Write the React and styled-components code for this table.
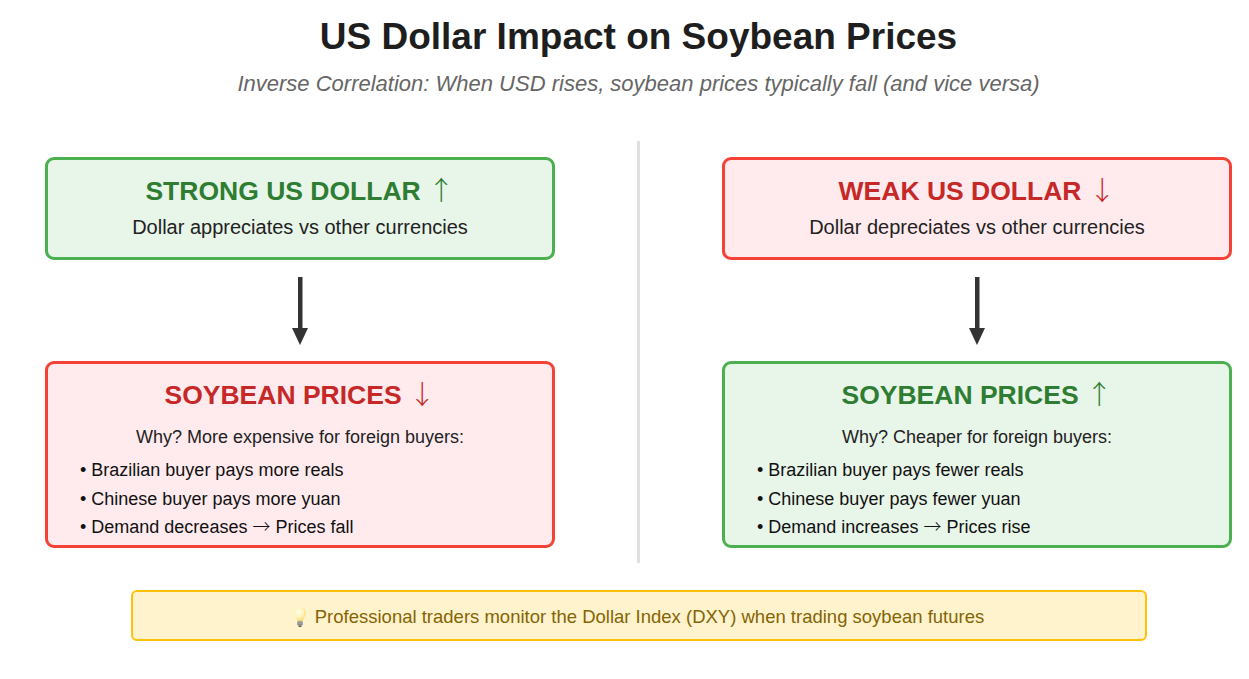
import React from "react";
import styled, { createGlobalStyle } from "styled-components";

const Global = createGlobalStyle`
  html, body { margin: 0; padding: 0; background: #ffffff; }
  body { font-family: "Liberation Sans", Arial, Helvetica, sans-serif; color: #222; }
  * { box-sizing: border-box; }
`;

const Page = styled.div`
  width: 1249px;
  padding: 16px 17px 0 45px;
`;

const Title = styled.h1`
  margin: 0;
  font-size: 37px;
  line-height: 42px;
  font-weight: 700;
  color: #1e1e1e;
  text-align: center;
`;

const Subtitle = styled.p`
  margin: 13px 0 0;
  font-size: 22px;
  line-height: 26px;
  font-style: italic;
  color: #666;
  text-align: center;
`;

const Columns = styled.div`
  margin-top: 44px;
  display: grid;
  grid-template-columns: 510px 3px 510px;
  justify-content: space-between;
`;

const Column = styled.div`
  display: flex;
  flex-direction: column;
  align-items: stretch;
  padding: 16px 0 15px;
`;

const Divider = styled.div`
  background: #e0e0e0;
  width: 3px;
`;

const palette = {
  green: { border: "#4caf50", bg: "#e8f5e9", title: "#2e7d32" },
  red: { border: "#f44336", bg: "#ffebee", title: "#c62828" },
};

const Box = styled.div`
  border: 3px solid ${(p) => palette[p.$tone].border};
  background: ${(p) => palette[p.$tone].bg};
  border-radius: 9px;
  height: ${(p) => (p.$tall ? "187px" : "103px")};
  padding: 16px 20px 0;
`;

const BoxTitle = styled.h2`
  margin: 0;
  font-size: 26.5px;
  line-height: 30px;
  height: 30px;
  font-weight: 700;
  text-align: center;
  color: ${(p) => palette[p.$tone].title};
`;

const Sym = styled.span`
  font-family: "Noto Sans CJK JP", "Noto Sans CJK SC", sans-serif;
  font-weight: 300;
  line-height: 0;
  font-size: ${(p) => p.$size || "1em"};
`;

const BoxText = styled.p`
  margin: 10px 0 0;
  font-size: 20px;
  line-height: 23px;
  text-align: center;
  color: #222;
`;

const Why = styled.p`
  margin: 17px 0 0;
  font-size: 18px;
  line-height: 21px;
  text-align: center;
  color: #222;
`;

const List = styled.ul`
  list-style: none;
  margin: 12px 0 0;
  padding: 0 0 0 12px;
  display: flex;
  flex-direction: column;
  gap: 7.5px;
`;

const Item = styled.li`
  font-size: 18px;
  line-height: 21px;
  height: 21px;
  color: #111;
`;

const ArrowWrap = styled.div`
  display: flex;
  justify-content: center;
  padding: 17px 0 16px;
`;

const Footer = styled.div`
  margin: 27px auto 0;
  width: 1016px;
  height: 51px;
  border: 2px solid #ffc107;
  background: #fff3cd;
  border-radius: 6px;
  display: flex;
  align-items: center;
  justify-content: center;
  gap: 8px;
  padding-top: 3px;
  font-size: 18.5px;
  color: #856404;
`;

const DownArrow = () => (
  <ArrowWrap>
    <svg width="16" height="68" viewBox="0 0 16 68">
      <rect x="6" y="0" width="4.5" height="54" fill="#333" />
      <polygon points="0,51 16,51 8,68" fill="#333" />
    </svg>
  </ArrowWrap>
);

const Bulb = () => (
  <svg width="14" height="22" viewBox="0 0 14 22">
    <defs>
      <radialGradient id="bulbfill" cx="40%" cy="35%" r="65%">
        <stop offset="0%" stopColor="#fffdf0" />
        <stop offset="60%" stopColor="#fff3b8" />
        <stop offset="100%" stopColor="#f2d66a" />
      </radialGradient>
    </defs>
    <path
      d="M7 1 C3.2 1 1 3.8 1 6.8 C1 9.4 2.6 10.8 3.6 12.4 C4.2 13.4 4.3 14.2 4.3 15 L9.7 15 C9.7 14.2 9.8 13.4 10.4 12.4 C11.4 10.8 13 9.4 13 6.8 C13 3.8 10.8 1 7 1 Z"
      fill="url(#bulbfill)"
    />
    <rect x="4.2" y="15.2" width="5.6" height="4.4" rx="1" fill="#8a8a8a" />
    <rect x="4.2" y="16.6" width="5.6" height="0.8" fill="#b8b8b8" />
    <rect x="5.4" y="19.4" width="3.2" height="1.6" rx="0.8" fill="#5a5a5a" />
  </svg>
);

const ListItem = ({ parts }) =>
  parts.length > 1 ? (
    <Item>
      • {parts[0]} <Sym>→</Sym> {parts[1]}
    </Item>
  ) : (
    <Item>• {parts[0]}</Item>
  );

const Side = ({ top, bottom }) => (
  <Column>
    <Box $tone={top.tone}>
      <BoxTitle $tone={top.tone}>
        {top.title} <Sym>{top.arrow}</Sym>
      </BoxTitle>
      <BoxText>{top.text}</BoxText>
    </Box>
    <DownArrow />
    <Box $tone={bottom.tone} $tall>
      <BoxTitle $tone={bottom.tone}>
        {bottom.title} <Sym>{bottom.arrow}</Sym>
      </BoxTitle>
      <Why>{bottom.why}</Why>
      <List>
        {bottom.items.map((t) => (
          <ListItem key={t.join("")} parts={t} />
        ))}
      </List>
    </Box>
  </Column>
);

export default function App() {
  const leftItems = [
    ["Brazilian buyer pays more reals"],
    ["Chinese buyer pays more yuan"],
    ["Demand decreases", "Prices fall"],
  ];
  const rightItems = [
    ["Brazilian buyer pays fewer reals"],
    ["Chinese buyer pays fewer yuan"],
    ["Demand increases", "Prices rise"],
  ];
  return (
    <>
      <Global />
      <Page>
        <Title>US Dollar Impact on Soybean Prices</Title>
        <Subtitle>
          Inverse Correlation: When USD rises, soybean prices typically fall (and vice versa)
        </Subtitle>
        <Columns>
          <Side
            top={{
              tone: "green",
              title: "STRONG US DOLLAR",
              arrow: "↑",
              text: "Dollar appreciates vs other currencies",
            }}
            bottom={{
              tone: "red",
              title: "SOYBEAN PRICES",
              arrow: "↓",
              why: "Why? More expensive for foreign buyers:",
              items: leftItems,
            }}
          />
          <Divider />
          <Side
            top={{
              tone: "red",
              title: "WEAK US DOLLAR",
              arrow: "↓",
              text: "Dollar depreciates vs other currencies",
            }}
            bottom={{
              tone: "green",
              title: "SOYBEAN PRICES",
              arrow: "↑",
              why: "Why? Cheaper for foreign buyers:",
              items: rightItems,
            }}
          />
        </Columns>
        <Footer>
          <Bulb />
          <span>Professional traders monitor the Dollar Index (DXY) when trading soybean futures</span>
        </Footer>
      </Page>
    </>
  );
}
